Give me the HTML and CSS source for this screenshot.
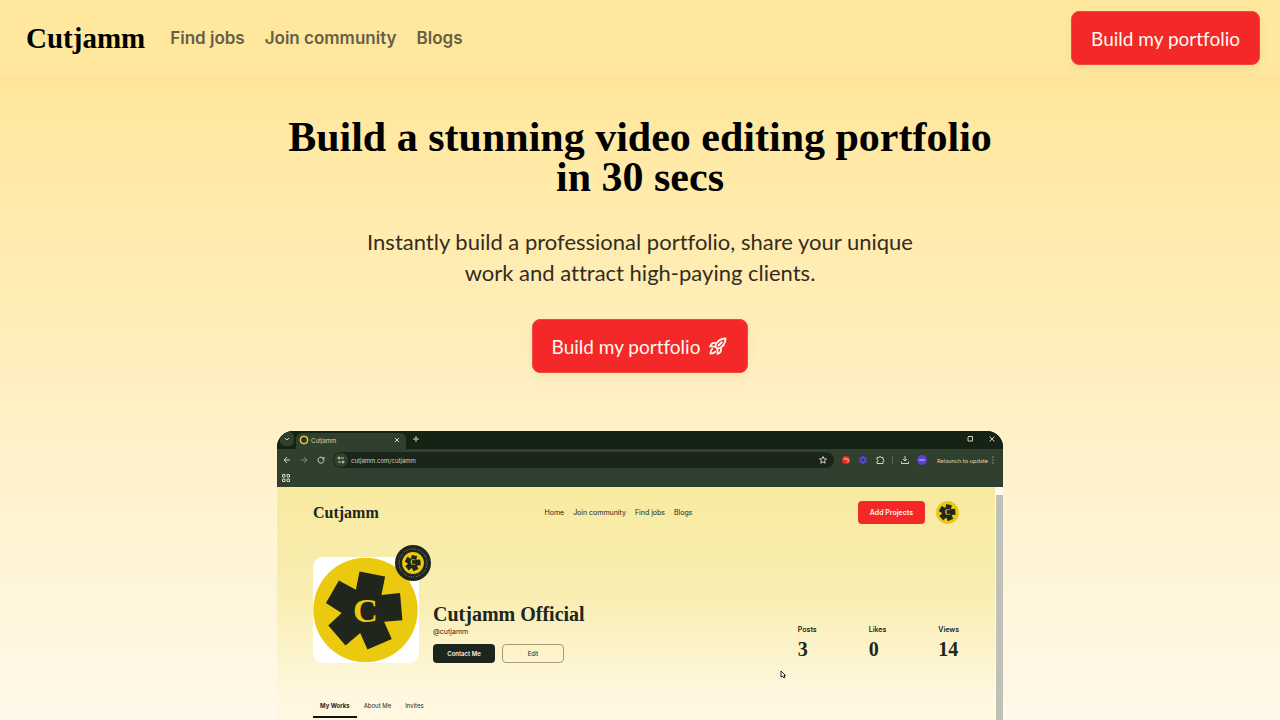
FILE: index.html
```html
<!DOCTYPE html>
<html lang="en">
<head>
<meta charset="utf-8">
<meta name="viewport" content="width=device-width, initial-scale=1">
<title>Cutjamm</title>
<link rel="stylesheet" href="styles.css">
</head>
<body>
<svg class="defs" aria-hidden="true">
  <symbol id="emblem" viewBox="38 53 316 316">
    <circle cx="196" cy="211" r="157" fill="#eac90f"/>
    <path fill="#20261b" d="M178 95 255 110 244 166 300 160 307 242 252 246 275 298 202 330 180 280 136 318 84 258 124 220 77 190 116 122 167 150Z"/>
    <text x="196" y="246" text-anchor="middle" class="emblem-letter">C</text>
  </symbol>
</svg>

<header class="site-header">
  <a class="brand" href="#">Cutjamm</a>
  <nav class="site-nav">
    <a href="#">Find jobs</a>
    <a href="#">Join community</a>
    <a href="#">Blogs</a>
  </nav>
  <button class="cta" type="button">Build my portfolio</button>
</header>

<main class="hero">
  <h1>Build a stunning video editing portfolio<br>in 30 secs</h1>
  <p class="lead">Instantly build a professional portfolio, share your unique<br>work and attract high-paying clients.</p>
  <button class="cta" type="button">Build my portfolio
    <svg class="rocket" viewBox="0 0 24 24" fill="none" stroke="currentColor" stroke-width="2.200" stroke-linecap="round" stroke-linejoin="round" aria-hidden="true">
      <path d="M8.500 12.500C10 8 13 3 21 3c0 8-5 11-9.500 12.500z"/>
      <path d="M9 8.500C6 7.500 4 9 2.500 12.500l5 .2M15.500 15c1 3-.5 5-4 6.500l-.2-5M16.500 7.500l-4 4M5 15.500c-2 1.500-2 5.500-2 5.500s4 0 5.500-2"/>
    </svg>
  </button>

  <section class="browser" aria-label="Portfolio preview">
    <div class="tabs">
      <button class="tab-search" type="button" aria-label="Search tabs"><svg viewBox="0 0 10 10"><path d="m3 4 2 2 2-2"/></svg></button>
      <div class="tab">
        <svg class="favicon" aria-hidden="true" viewBox="0 0 10 10"><circle cx="5" cy="5" r="4" fill="#30351d"/><circle cx="5" cy="5" r="3.500" class="favicon-ring"/></svg>
        <span>Cutjamm</span>
        <svg class="tab-close" viewBox="0 0 10 10"><path d="m3 3 4 4M7 3 3 7"/></svg>
      </div>
      <svg viewBox="0 0 10 10"><path d="M5 2v6M2 5h6"/></svg>
      <div class="window-controls">
        <svg viewBox="0 0 10 10"><path d="M3 2.500h4.500v4.500M3 3v4h4.500"/></svg>
        <svg viewBox="0 0 10 10"><path d="m2.500 2.500 5 5M7.500 2.500l-5 5"/></svg>
      </div>
    </div>
    <div class="toolbar">
      <svg viewBox="0 0 10 10"><path d="M8 5H2M5 2 2 5l3 3"/></svg>
      <svg class="dim" viewBox="0 0 10 10"><path d="M2 5h6M5 2l3 3-3 3"/></svg>
      <svg viewBox="0 0 10 10"><path d="M7.500 3.500A3 3 0 1 0 8 5M8 2v2H6"/></svg>
      <div class="address">
        <svg class="site-info" viewBox="0 0 14 14"><circle cx="7" cy="7" r="7" class="info-disc"/><path d="M7 5h3M4 9h3"/><circle cx="5" cy="5" r="1"/><circle cx="9" cy="9" r="1"/></svg>
        <span>cutjamm.com/cutjamm</span>
        <svg class="star" viewBox="0 0 10 10"><path d="m5 1.500 1 2.300 2.500.2-2 1.700.7 2.500L5 6.900 2.800 8.200l.7-2.500-2-1.700L4 3.800z"/></svg>
      </div>
      <div class="extensions">
        <svg viewBox="0 0 10 10"><circle cx="5" cy="5" r="4" class="red"/><path d="M3 4h3a1 1 0 0 1 0 3M3 4l1-1"/></svg>
        <svg viewBox="0 0 10 10"><path class="purple" d="m4 1 2 0 .4 1.200L8 2l.7 1.500L8 5l.7 1.500L8 8l-1.600-.2L6 9H4l-.4-1.200L2 8l-.7-1.500L2 5l-.7-1.500L2 2l1.600.2z"/><circle class="hub" cx="5" cy="5" r="1.500"/></svg>
        <svg viewBox="0 0 10 10"><path d="M2 2.500h2a1 1 0 0 1 2 0h2v2a1 1 0 0 1 0 2V8.500H2v-2a1 1 0 0 0 0-2z"/></svg>
        <i class="divider"></i>
        <svg viewBox="0 0 10 10"><path d="M5 1v5M3 4l2 2 2-2M1.500 6.500v2h7v-2"/></svg>
        <svg viewBox="0 0 10 10"><circle cx="5" cy="5" r="5" class="purple"/><path d="M2 5h6"/></svg>
      </div>
      <span class="relaunch">Relaunch to update</span>
      <svg class="kebab" viewBox="0 0 4 10"><path d="M2 1.500v1M2 4.500v1M2 7.500v1"/></svg>
    </div>
    <div class="bookmarks">
      <svg viewBox="0 0 10 10"><path d="M1.500 1.500h2.500v2.500H1.500zM6 1.500h2.500v2.500H6zM1.500 6h2.500v2.500H1.500zM6 6h2.500v2.500H6z"/></svg>
    </div>
    <div class="viewport">
      <div class="page">
        <div class="page-header">
          <a class="page-brand" href="#">Cutjamm</a>
          <nav class="page-nav">
            <a href="#">Home</a><a href="#">Join community</a><a href="#">Find jobs</a><a href="#">Blogs</a>
          </nav>
          <div class="page-actions">
            <button class="add" type="button">Add Projects</button>
            <svg class="mini-avatar" role="img" aria-label="Cutjamm"><use href="#emblem"/></svg>
          </div>
        </div>
        <div class="profile">
          <div class="avatar">
            <svg class="avatar-art" aria-hidden="true"><use href="#emblem"/></svg>
            <svg class="seal" viewBox="0 0 36 36" aria-hidden="true">
              <circle cx="18" cy="18" r="18" fill="#20261b"/>
              <circle cx="18" cy="18" r="14" class="seal-lettering"/>
              <use href="#emblem" x="7" y="7" width="22" height="22"/>
            </svg>
          </div>
          <div class="identity">
            <h2>Cutjamm Official</h2>
            <p>@cutjamm</p>
            <div class="identity-actions">
              <button class="contact" type="button">Contact Me</button>
              <button class="edit" type="button">Edit</button>
            </div>
          </div>
          <dl class="stats">
            <div><dt>Posts</dt><dd>3</dd></div>
            <div><dt>Likes</dt><dd>0</dd></div>
            <div><dt>Views</dt><dd>14</dd></div>
          </dl>
        </div>
        <nav class="page-tabs">
          <a class="active" href="#">My Works</a><a href="#">About Me</a><a href="#">Invites</a>
        </nav>
        <svg class="pointer" viewBox="0 0 6 9" aria-hidden="true"><path d="M1 1v6l1.500-1L4 8l1-.5L4 5.500h1.500z"/></svg>
      </div>
      <div class="scrollbar"><span></span></div>
    </div>
  </section>
</main>
</body>
</html>
```

FILE: styles.css
```css
* { box-sizing: border-box; }

body {
  margin: 0;
  min-height: 100vh;
  background: linear-gradient(#ffe79c 0, #ffe79c 80px, #fff9ea 100%);
  color: #000;
  font-family: Lato, "Liberation Sans", sans-serif;
  font-variant-ligatures: none;
}

a { color: inherit; text-decoration: none; }
button { border: 0; font-family: inherit; font-variant-ligatures: inherit; cursor: pointer; }
svg { display: block; flex: none; }

.defs { display: none; }

.emblem-letter {
  fill: #eac90f;
  font: bold 104px "Liberation Serif", serif;
}

.site-header {
  display: flex;
  align-items: center;
  height: 76px;
  padding: 0 20px 0 26px;
  background: #ffe79e;
  box-shadow: 0 4px 20px rgba(120, 90, 0, 0.04);
}

.brand {
  font: bold 29px/36px "Liberation Serif", serif;
}

.site-nav {
  display: flex;
  gap: 20px;
  margin-left: 25px;
  color: #665e45;
  font-family: Inter, sans-serif;
  font-size: 17px;
  font-weight: 600;
}

.cta {
  display: inline-flex;
  align-items: center;
  gap: 8px;
  height: 54px;
  padding: 0 19px;
  border: 1px solid #f5483c;
  border-radius: 8px;
  background: #f42828;
  box-shadow: 0 4px 12px rgba(120, 90, 0, 0.06);
  color: #fffaf0;
  font-size: 19px;
}

.site-header .cta { margin-left: auto; }
.rocket { width: 20px; height: 20px; }

.hero {
  display: flex;
  flex-direction: column;
  align-items: center;
  padding-top: 41px;
  text-align: center;
}

h1 {
  margin: 0;
  font: bold 42px/40px "Liberation Serif", serif;
}

.lead {
  margin: 29px 0 31px;
  color: #342c1c;
  font-size: 22px;
  line-height: 31px;
}

.browser {
  width: calc(100% - 32px);
  max-width: 726px;
  margin-top: 58px;
  overflow: hidden;
  border-radius: 16px 16px 0 0;
  background: #30402f;
  color: #d9d3b4;
  font-family: Inter, sans-serif;
  font-size: 7px;
  text-align: left;
}

.tabs svg, .toolbar svg, .bookmarks svg {
  width: 10px;
  height: 10px;
  fill: none;
  stroke: #d9d3b4;
  stroke-width: 1;
}

.tabs {
  display: flex;
  align-items: center;
  gap: 5px;
  height: 18px;
  padding: 0 6px 2px 3px;
  background: #142314;
}

.tab-search {
  padding: 2px;
  border-radius: 5px;
  background: #30402f;
}

.tab {
  display: flex;
  align-items: center;
  gap: 2px;
  width: 110px;
  height: 16px;
  margin: 0 0 -2px -3px;
  padding: 0 4px 2px 3px;
  align-self: flex-end;
  border-radius: 6px 6px 0 0;
  background: #30402f;
  font-size: 6px;
}

.tabs .favicon-ring { stroke: #eac90f; stroke-width: 1; }
.tab-close { margin-left: auto; }
.window-controls { display: flex; gap: 12px; margin-left: auto; }

.toolbar {
  display: flex;
  align-items: center;
  gap: 7px;
  height: 22px;
  padding: 0 8px 0 5px;
}

.toolbar .dim { opacity: 0.5; }

.address {
  display: flex;
  flex: 1;
  align-items: center;
  gap: 3px;
  height: 16px;
  padding: 0 6px 0 1px;
  border-radius: 8px;
  background: #1c251b;
  font-size: 6px;
}

.toolbar .site-info { width: 14px; height: 14px; }
.toolbar .info-disc { fill: #30402f; stroke: none; }
.star { margin-left: auto; }

.extensions { display: flex; align-items: center; gap: 7px; }
.divider { width: 1px; height: 8px; background: #655f42; }
.toolbar .red { fill: #f42828; stroke: none; }
.toolbar .purple { fill: #5b40dc; stroke: none; }
.toolbar .hub { fill: #30402f; stroke: none; }
.relaunch { font: 6px Lato, sans-serif; margin-left: 3px; white-space: nowrap; }
.toolbar .kebab { width: 4px; margin-left: -4px; }

.bookmarks { height: 16px; padding: 2px 4px; }

.viewport { display: flex; color: #20261b; }

.page {
  position: relative;
  flex: 1;
  padding: 0 36px 2px;
  background: linear-gradient(#f8eaa0 0, #f9eeb2 110px, #fff7e0 210px, #fff7e0);
}

.page-header {
  display: grid;
  grid-template-columns: 1fr auto 1fr;
  align-items: center;
  height: 51px;
}

.page-brand { font: bold 16px/20px "Liberation Serif", serif; }
.page-nav { display: flex; gap: 9px; margin-right: 35px; }
.page-actions { display: flex; align-items: center; justify-content: flex-end; gap: 11px; }

.add {
  height: 23px;
  padding: 0 12px;
  border-radius: 4px;
  background: #f42828;
  color: #fff6e8;
  font-size: 7px;
  font-weight: 600;
}

.mini-avatar { width: 23px; height: 23px; }

.profile { display: flex; align-items: flex-end; padding-top: 19px; }

.avatar {
  position: relative;
  width: 106px;
  height: 106px;
  border-radius: 10px;
  background: #fff;
}

.avatar-art { width: 105px; height: 106px; }
.seal { position: absolute; top: -12px; right: -12px; width: 36px; height: 36px; }
.seal-lettering { fill: none; stroke: #979278; stroke-width: 1; stroke-dasharray: 1 1 1 1 1 2; }

.identity { margin-left: 14px; }
h2 { margin: 0; font: bold 20px/24px "Liberation Serif", serif; }
.identity p { margin: 1px 0 7px; line-height: 10px; }
.identity-actions { display: flex; gap: 7px; }

.identity-actions button {
  width: 62px;
  height: 19px;
  padding: 0;
  border-radius: 4px;
  font-size: 6px;
}

.identity-actions .contact { background: #1c251b; color: #fff6e8; font-weight: 600; }
.identity-actions .edit { border: 1px solid #a59c72; background: transparent; color: #20261b; }

.stats { display: flex; gap: 52px; margin: 0 0 3px auto; }
.stats dt { font-weight: 600; line-height: 10px; }
.stats dd { margin: 3px 0 0; font: bold 20px/22px "Liberation Serif", serif; }

.page-tabs { display: flex; margin-top: 36px; font-size: 6px; }
.page-tabs a { padding: 2px 7px 5px; line-height: 10px; border-bottom: 2px solid transparent; }
.page-tabs .active { border-color: #111; font-weight: 700; }

.pointer {
  position: absolute;
  top: 183px;
  left: 503px;
  width: 6px;
  height: 9px;
  fill: #fff;
  stroke: #20261b;
  stroke-width: 1;
}

.scrollbar { width: 8px; padding: 8px 0 0 1px; background: #fffaf0; }
.scrollbar span { display: block; height: 100%; background: #bfc1b8; }
```
